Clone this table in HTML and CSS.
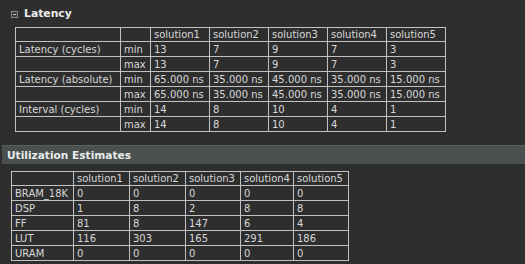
FILE: index.html
```html
<!DOCTYPE html>
<html>
<head>
<meta charset="utf-8">
<link rel="stylesheet" href="styles.css">
</head>
<body>
<div class="section-head">
  <span class="toggle"><span class="minus"></span></span>
  <span class="title">Latency</span>
</div>
<table class="grid lat">
  <colgroup>
    <col class="c-name"><col class="c-mm"><col class="c-sol"><col class="c-sol"><col class="c-sol"><col class="c-sol"><col class="c-sol">
  </colgroup>
  <tr class="first"><td></td><td></td><td>solution1</td><td>solution2</td><td>solution3</td><td>solution4</td><td>solution5</td></tr>
  <tr><td>Latency (cycles)</td><td>min</td><td>13</td><td>7</td><td>9</td><td>7</td><td>3</td></tr>
  <tr><td></td><td>max</td><td>13</td><td>7</td><td>9</td><td>7</td><td>3</td></tr>
  <tr><td>Latency (absolute)</td><td>min</td><td>65.000 ns</td><td>35.000 ns</td><td>45.000 ns</td><td>35.000 ns</td><td>15.000 ns</td></tr>
  <tr><td></td><td>max</td><td>65.000 ns</td><td>35.000 ns</td><td>45.000 ns</td><td>35.000 ns</td><td>15.000 ns</td></tr>
  <tr><td>Interval (cycles)</td><td>min</td><td>14</td><td>8</td><td>10</td><td>4</td><td>1</td></tr>
  <tr><td></td><td>max</td><td>14</td><td>8</td><td>10</td><td>4</td><td>1</td></tr>
</table>
<div class="bar"><span class="bar-title">Utilization Estimates</span></div>
<table class="grid util">
  <colgroup>
    <col class="u-name"><col class="u-a"><col class="u-a"><col class="u-b"><col class="u-c"><col class="u-b">
  </colgroup>
  <tr class="first"><td></td><td>solution1</td><td>solution2</td><td>solution3</td><td>solution4</td><td>solution5</td></tr>
  <tr><td>BRAM_18K</td><td>0</td><td>0</td><td>0</td><td>0</td><td>0</td></tr>
  <tr><td>DSP</td><td>1</td><td>8</td><td>2</td><td>8</td><td>8</td></tr>
  <tr><td>FF</td><td>81</td><td>8</td><td>147</td><td>6</td><td>4</td></tr>
  <tr><td>LUT</td><td>116</td><td>303</td><td>165</td><td>291</td><td>186</td></tr>
  <tr><td>URAM</td><td>0</td><td>0</td><td>0</td><td>0</td><td>0</td></tr>
</table>
</body>
</html>
```

FILE: styles.css
```css
html, body {
  margin: 0;
  padding: 0;
  background: #2e2e2e;
}
body {
  font-family: "DejaVu Sans", sans-serif;
  font-size: 10px;
  color: #d8d8d8;
}
.section-head {
  display: flex;
  align-items: center;
  gap: 6px;
  padding: 7px 0 0 11px;
  height: 13px;
}
.toggle {
  box-sizing: border-box;
  width: 7px;
  height: 7px;
  border: 1px solid #8c8c8c;
  background: #3a3a3a;
  display: flex;
  align-items: center;
  justify-content: center;
  margin-top: 2px;
}
.minus {
  width: 3px;
  height: 1px;
  background: #c8c8c8;
}
.title {
  font-weight: bold;
  font-size: 10.8px;
  line-height: 13px;
  color: #ececec;
}
.grid {
  border-collapse: collapse;
  table-layout: fixed;
  border: 1px solid #8e8e8e;
}
.grid td {
  border: 1px solid #c2c2c2;
  height: 14px;
  padding: 0 1px 0 3px;
  white-space: nowrap;
  overflow: hidden;
  line-height: 13px;
}
.grid tr.first td {
  height: 12px;
}
.lat {
  margin: 7px 0 0 15px;
  width: 431px;
}
.c-name { width: 105px; }
.c-mm { width: 30px; }
.c-sol { width: 59px; }
.bar {
  margin: 13px 0 0 2px;
  height: 18px;
  background: #4a4f4f;
  border-top: 1px solid #5b6060;
  display: flex;
  align-items: center;
  padding-left: 5px;
}
.bar-title {
  font-weight: bold;
  font-size: 10.6px;
  color: #e8ecec;
}
.util {
  margin: 7px 0 0 11px;
  width: 338px;
}
.u-name { width: 62px; }
.u-a { width: 56px; }
.u-b { width: 55px; }
.u-c { width: 53px; }
```
